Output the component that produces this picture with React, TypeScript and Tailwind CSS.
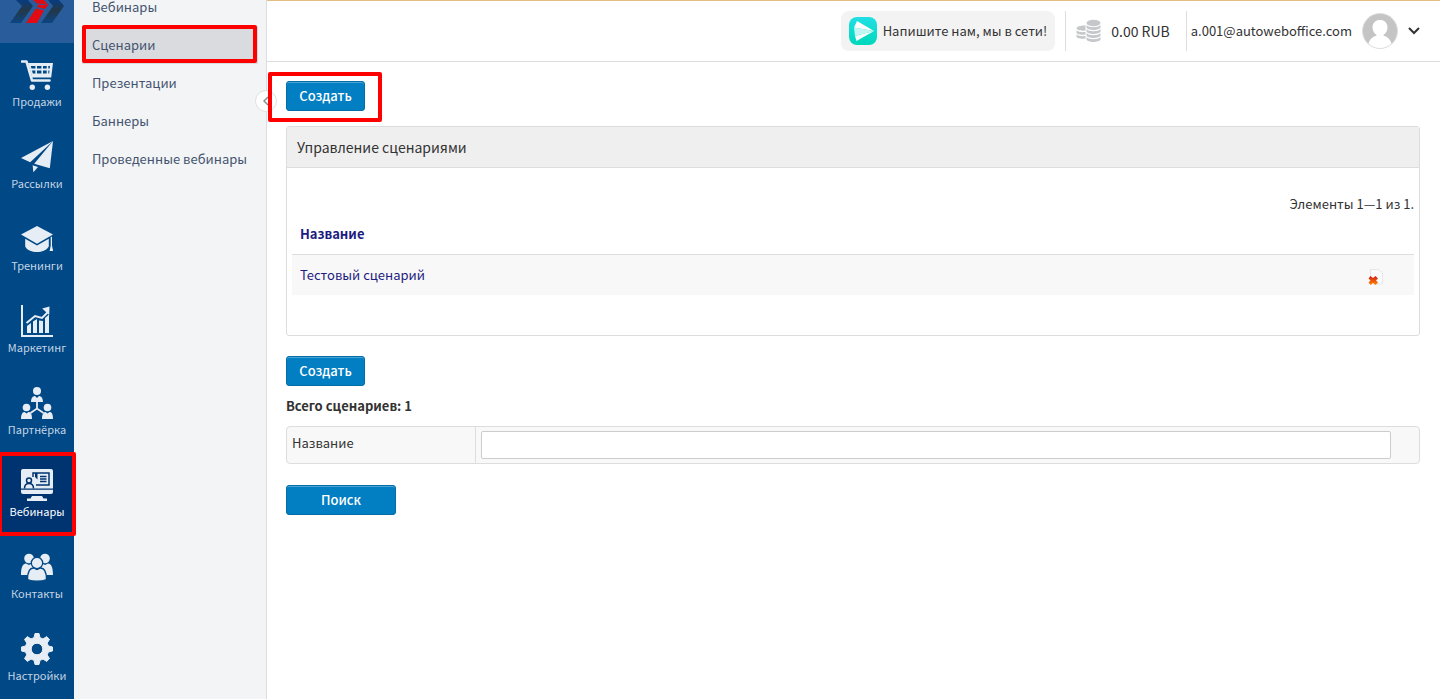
import { useState, type ReactNode } from "react";

type Section = { id: string; label: string; icon: ReactNode };

const sections: Section[] = [
  {
    id: "sales",
    label: "Продажи",
    icon: (
      <>
        <path d="M1 2.5h4.500L11 21.500h17.500" fill="none" stroke="currentColor" strokeWidth="2.600" strokeLinejoin="round" strokeLinecap="round" />
        <path fillRule="evenodd" d="M7 4h25l-1.800 14.500H11.200zM9.800 7l.7 2.600h3.900V7zm6.200 0v2.600h4.400V7zm6 0v2.600h3.700V7zm5.300 0v2.600h1.400l.3-2.600zM11 11.400l.8 3h2.600v-3zm5 0v3h4.400v-3zm6 0v3h3.700v-3zm5.300 0v3h.9l.3-3z" />
        <circle cx="11.300" cy="28.300" r="2.700" />
        <circle cx="26.400" cy="28.300" r="2.700" />
      </>
    ),
  },
  {
    id: "mail",
    label: "Рассылки",
    icon: (
      <>
        <path d="M32 0 0 17l9.2 4.2z" />
        <path d="M32 0 28.8 27.2 13.2 22.8z" />
        <path d="M11.6 24.3l5.4 1.6-4.6 5.3z" />
      </>
    ),
  },
  {
    id: "training",
    label: "Тренинги",
    icon: (
      <>
        <path d="M16 3 32 11.4 16 20.8 0 11.4z" />
        <path d="M4.200 15.800 16 22.600l11.800-6.800v7.700C25 27.700 21 29 16 29S6.500 27.700 4.200 23.500z" />
        <path d="M29.700 13.800h1.300v9l1.200 5.200h-3.600l1.100-5.200z" />
      </>
    ),
  },
  {
    id: "marketing",
    label: "Маркетинг",
    icon: (
      <>
        <path d="M0 0h2v30h30v2H0z" />
        <path d="M6 21l4-3v10H6zM12 16.500l4-2.500v14h-4zM18 15.500l4 .5v12h-4zM24 13l4-3.500V28h-4z" />
        <path d="M5.500 18 14 11l7 2 6-6" fill="none" stroke="currentColor" strokeWidth="2" />
        <path d="M28.500 1.500l-.3 8.500-7-6.500z" />
      </>
    ),
  },
  {
    id: "partners",
    label: "Партнёрка",
    icon: (
      <>
        <circle cx="16" cy="4" r="4" />
        <path d="M10 15c0-4 2-6 4-6l2 2 2-2c2 0 4 2 4 6z" />
        <circle cx="5.500" cy="20.500" r="3.800" />
        <path d="M0 32c0-4.500 1.500-7 3.500-7l2 1.500 2-1.500c2.500 0 3.500 2.500 3.500 7z" />
        <circle cx="26.500" cy="20.500" r="3.800" />
        <path d="M21 32c0-4.500 1.500-7 3.500-7l2 1.500 2-1.500c2.500 0 3.500 2.500 3.500 7z" />
        <path d="M16 14v7.500M9.500 26l6.500-4.500 6.500 4.500" fill="none" stroke="currentColor" strokeWidth="1.800" />
      </>
    ),
  },
  {
    id: "webinars",
    label: "Вебинары",
    icon: (
      <>
        <path d="M2 0h28a2 2 0 0 1 2 2v17.500H0V2a2 2 0 0 1 2-2z" />
        <path d="M0 20.700h32V23a2 2 0 0 1-2 2H2a2 2 0 0 1-2-2z" />
        <path d="M11 27h10l1.500 2.500H26V32H6v-2.500h3.500z" />
        <path d="M12 8V4h16v12H15" className="fill-none stroke-[#003471]" strokeWidth="1.500" />
        <path d="M19 7.500h6.500M19 10h6.500M19 12.500h6.500" className="stroke-[#003471]" strokeWidth="1.400" />
        <path d="M14 4h2.500v6.500L14 8z" className="fill-[#003471]" />
        <circle cx="8" cy="11.500" r="2.500" className="fill-none stroke-[#003471]" strokeWidth="1.500" />
        <path d="M3.500 19.500c0-3.500 2-5 4.500-5s4.500 1.500 4.500 5" className="fill-none stroke-[#003471]" strokeWidth="1.500" />
      </>
    ),
  },
  {
    id: "contacts",
    label: "Контакты",
    icon: (
      <>
        <circle cx="8" cy="7.500" r="4.800" />
        <path d="M0 24c0-8 2-11.500 5-11.500l3 1.500 3-1.500 3 6L8 24z" />
        <circle cx="24" cy="7.500" r="4.800" />
        <path d="M32 24c0-8-2-11.500-5-11.500L24 14l-3-1.500-3 6 6 5.500z" />
        <g className="stroke-[#014886]" strokeWidth="1.300">
          <circle cx="16" cy="12" r="5.700" />
          <path d="M6.500 28.500c0-7.500 2.500-11.500 6-11.500l3.500 1.500 3.500-1.500c3.500 0 6 4 6 11.500-5 2.300-14 2.300-19 0z" />
        </g>
      </>
    ),
  },
  {
    id: "settings",
    label: "Настройки",
    icon: (
      <path
        fillRule="evenodd"
        stroke="currentColor"
        strokeWidth="1"
        strokeLinejoin="round"
        d="M14 .5h4l1 4.200 3 1.200 3.700-2.300 2.800 2.800-2.300 3.700 1.200 2.900 4.100 1v4l-4.100 1-1.200 2.900 2.300 3.700-2.800 2.800-3.700-2.300-3 1.200-1 4.200h-4l-1-4.200-3-1.200-3.700 2.300-2.800-2.800 2.300-3.700L4.600 19l-4.100-1v-4l4.100-1 1.200-2.900-2.300-3.700 2.800-2.800L10 5.900l3-1.200zM16 10.200a5.800 5.800 0 1 0 0 11.600 5.800 5.800 0 0 0 0-11.600z"
      />
    ),
  },
];

const subMenu = ["Вебинары", "Сценарии", "Презентации", "Баннеры", "Проведенные вебинары"];

function Highlight({ className }: { className: string }) {
  return <span aria-hidden="true" className={`pointer-events-none absolute z-20 rounded-xs border-4 border-[#ff0000] ${className}`} />;
}

function Logo() {
  return (
    <svg width="54" height="23" viewBox="10 0 54 23" aria-hidden="true">
      <defs>
        <linearGradient id="blade" x1="0" y1="0" x2="0" y2="1">
          <stop offset="0" stopColor="#063c82" />
          <stop offset="0.45" stopColor="#243746" />
          <stop offset="1" stopColor="#0b4583" />
        </linearGradient>
      </defs>
      <path d="M16 0h12l5 6-12 17H10L22 6z" fill="url(#blade)" />
      <path d="M48 0h11l5 6-12 17H41L53 6z" fill="url(#blade)" />
      <path d="M32 0h12l4 5-3 4-8-2 1-2zM36 8.500l8 2L37 23H26z" fill="#e20a13" />
      <path d="M33 0l4 4 8 .5" fill="none" stroke="#285c9b" />
    </svg>
  );
}

function PrimaryButton({ children, className, type = "button" }: { children: ReactNode; className: string; type?: "button" | "submit" }) {
  return (
    <button
      type={type}
      className={`block h-[30px] rounded-[3px] border border-[#046ca6] bg-[#027ec2] leading-7 font-medium text-white shadow-[inset_0_1px_0_#4aa4d5] hover:bg-[#0272b0] ${className}`}
    >
      {children}
    </button>
  );
}

function Sidebar() {
  return (
    <nav className="w-[74px] shrink-0 bg-[#014886]">
      <a href="#home" aria-label="Главная" className="flex h-[43px] justify-center bg-[#285c9b]">
        <Logo />
      </a>
      {sections.map((s) => {
        const active = s.id === "webinars";
        return (
          <a
            key={s.id}
            href={`#${s.id}`}
            className={`relative flex h-[82px] flex-col items-center pt-4 ${active ? "bg-[#003471] text-white" : "text-[#c5d5e4]"}`}
          >
            <svg width="32" height="32" viewBox="0 0 32 32" fill="currentColor" className="text-[#e6edf4]" aria-hidden="true">
              {s.icon}
            </svg>
            <span className="text-[11px] leading-5">{s.label}</span>
            {active && <Highlight className="-inset-y-px -right-0.5 -left-0.5" />}
          </a>
        );
      })}
    </nav>
  );
}

function SubMenu() {
  return (
    <aside className="relative w-[193px] shrink-0 border-r border-[#dcdddf] bg-[#f3f4f6] px-2">
      <ul className="text-[#44546f]">
        {subMenu.map((item, i) => (
          <li key={item} className="relative first:-mt-3">
            <a
              href="#webinars"
              className={`block h-[38px] px-2.5 leading-[38px] whitespace-nowrap ${i === 1 ? "bg-[#dadbdf]" : ""}`}
            >
              {item}
            </a>
            {i === 1 && <Highlight className="-top-px right-px bottom-px left-0" />}
          </li>
        ))}
      </ul>
      <button
        type="button"
        aria-label="Свернуть меню"
        className="absolute top-[90px] -right-[11px] flex size-[22px] items-center justify-center rounded-full border border-[#e0e0e2] bg-white"
      >
        <svg width="6" height="10" viewBox="0 0 6 10" fill="none" className="stroke-[#8b8b8b]" strokeWidth="1.500">
          <path d="M5 1 1 5l4 4" />
        </svg>
      </button>
    </aside>
  );
}

function Header() {
  return (
    <header className="flex h-[62px] items-center justify-end border-t border-b border-t-[#e3bf85] border-b-[#dddddd] pr-5">
      <a href="#chat" className="flex h-10 items-center gap-1.5 rounded-lg bg-[#f3f3f3] px-2">
        <svg width="28" height="28" viewBox="0 0 28 28" aria-hidden="true">
          <defs>
            <linearGradient id="chat" x1="0" y1="0" x2="0" y2="1">
              <stop offset="0" stopColor="#20dfe5" />
              <stop offset="1" stopColor="#00d8bb" />
            </linearGradient>
          </defs>
          <rect width="28" height="28" rx="8" fill="url(#chat)" />
          <path d="M8 4l17 10L5 10.500z" fill="#ffffff" />
          <path d="M6 19l19-5L7.500 24z" fill="#ffffff" />
          <path d="M5 10.500 25 14 6 19z" fill="#c4f7f3" />
        </svg>
        <span>Напишите нам, мы в сети!</span>
      </a>
      <div className="ml-2.5 flex h-10 items-center gap-2.5 border-l border-[#dddddd] pl-2.5">
        <svg width="25" height="24" viewBox="0 0 25 24" className="fill-[#c6c7cb]" aria-hidden="true">
          <ellipse cx="17.500" cy="4" rx="7" ry="3.300" />
          <path d="M10.500 6c2 3 12 3 14 0v2.500c-1 3.300-13 3.300-14 0zM10.500 10c2 3 12 3 14 0v2.500c-1 3.300-13 3.300-14 0zM10.500 14c2 3 12 3 14 0v2.500c-1 3.300-13 3.300-14 0zM10.500 18c2 3 12 3 14 0v2.500c-1 3.300-13 3.300-14 0z" />
          <path d="M9.500 6.500v5C5 12.200.5 11 .5 9.300S5 6.300 9.500 6.500zM.5 11.300c2 2 6 2 9 1.700v2.500c-4 .7-9-.2-9-2zM.5 15.300c2 2 6 2 9 1.700v2.500c-4 .7-9-.2-9-2z" />
        </svg>
        <span className="text-sm">0.00 RUB</span>
      </div>
      <div className="ml-4 flex h-10 items-center border-l border-[#dddddd] pl-1">
        <span>a.001@autoweboffice.com</span>
        <button type="button" aria-label="Профиль" className="ml-2.5 flex items-center gap-2.5">
          <svg width="36" height="36" viewBox="0 0 36 36" aria-hidden="true">
            <defs>
              <clipPath id="avatar">
                <circle cx="18" cy="18" r="17.500" />
              </clipPath>
            </defs>
            <circle cx="18" cy="18" r="17.500" fill="#c4c4c4" />
            <g clipPath="url(#avatar)" fill="#ffffff">
              <path d="M10.500 14.500c0-5 3.300-7.500 7.500-7.500s7.500 2.500 7.500 7.500c0 3.500-2 6.200-4 7.300v.7c5 1.500 8.500 5 9 14H5.500c.5-9 4-12.500 9-14v-.7c-2-1.100-4-3.800-4-7.300z" />
            </g>
            <circle cx="18" cy="18" r="17.500" fill="none" stroke="#dedede" />
          </svg>
          <svg width="12" height="8" viewBox="0 0 12 8" fill="none" className="stroke-[#333333]" strokeWidth="2">
            <path d="m1 1 5 5 5-5" />
          </svg>
        </button>
      </div>
    </header>
  );
}

function DeleteIcon() {
  return (
    <svg width="16" height="16" viewBox="0 0 16 16" aria-hidden="true">
      <defs>
        <linearGradient id="cross" x1="0" y1="0" x2="0" y2="1">
          <stop offset="0" stopColor="#d51b12" />
          <stop offset="1" stopColor="#ff8a00" />
        </linearGradient>
      </defs>
      <path d="M2.500.5h8l4 3.500v11h-12z" fill="#fbfbfb" stroke="#e6e6e6" />
      <path d="M2.500 7 5 9l2.500-2L10 9.500 8 11.500l2 2L7.500 16 5 14l-2.500 2L.5 13.500l2-2-2-2z" fill="url(#cross)" />
    </svg>
  );
}

export default function App() {
  const [query, setQuery] = useState("");

  return (
    <div className="flex min-h-screen overflow-hidden bg-white font-['Noto_Sans_CJK_SC','Noto_Sans',sans-serif] text-[13px] text-[#333333]">
      <Sidebar />
      <SubMenu />
      <div className="min-w-0 flex-1">
        <Header />
        <main className="pt-[19px] pr-5 pl-[19px]">
          <div className="relative w-fit">
            <PrimaryButton className="w-[79px]">Создать</PrimaryButton>
            <Highlight className="-top-[9px] -right-[17px] -bottom-[11px] -left-[18px]" />
          </div>

          <section className="mt-[15px] rounded-[3px] border border-[#dddddd]">
            <h1 className="h-[41px] border-b border-[#dddddd] bg-[#efefef] px-2.5 text-sm leading-10">Управление сценариями</h1>
            <div className="px-[5px] pt-[26px] pb-10">
              <p className="text-right leading-5">Элементы 1—1 из 1.</p>
              <table className="w-full text-left text-[#1c1c80]">
                <thead>
                  <tr className="h-10 border-b border-[#dddddd]">
                    <th scope="col" className="px-2 font-bold">
                      <a href="#sort">Название</a>
                    </th>
                    <td />
                  </tr>
                </thead>
                <tbody>
                  <tr className="h-[41px] bg-[#f8f8f8]">
                    <td className="px-2">
                      <a href="#scenario">Тестовый сценарий</a>
                    </td>
                    <td className="w-20 pr-[30px]">
                      <button type="button" aria-label="Удалить" className="ml-auto block pt-1">
                        <DeleteIcon />
                      </button>
                    </td>
                  </tr>
                </tbody>
              </table>
            </div>
          </section>

          <PrimaryButton className="mt-5 w-[79px]">Создать</PrimaryButton>
          <p className="mt-2.5 leading-5 font-bold">Всего сценариев: 1</p>

          <form className="mt-2.5" onSubmit={(e) => e.preventDefault()}>
            <div className="flex h-[38px] rounded-[4px] border border-[#dddddd] bg-[#f8f8f8]">
              <label htmlFor="name" className="w-[189px] shrink-0 border-r border-[#dddddd] px-[5px] leading-8">
                Название
              </label>
              <div className="flex-1 py-1 pr-7 pl-[5px]">
                <input
                  id="name"
                  type="text"
                  value={query}
                  onChange={(e) => setQuery(e.target.value)}
                  className="block h-7 w-full rounded-xs border border-[#cccccc] bg-white px-1.5"
                />
              </div>
            </div>
            <PrimaryButton type="submit" className="mt-[21px] w-[110px]">
              Поиск
            </PrimaryButton>
          </form>
        </main>
      </div>
    </div>
  );
}
